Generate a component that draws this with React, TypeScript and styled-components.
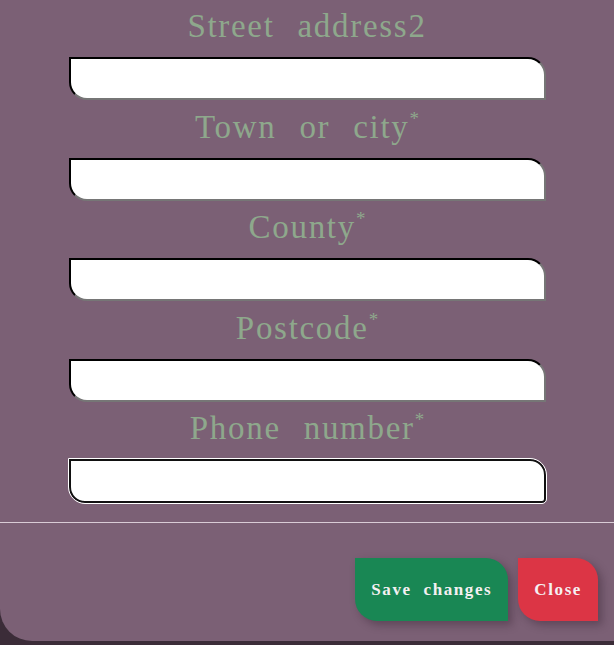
import React from 'react';
import styled, { createGlobalStyle } from 'styled-components';

const GlobalStyle = createGlobalStyle`
  html, body {
    margin: 0;
    padding: 0;
    background: #3b2c38;
  }
`;

const fields = [
  { label: 'Street address2', required: false },
  { label: 'Town or city', required: true },
  { label: 'County', required: true },
  { label: 'Postcode', required: true },
  { label: 'Phone number', required: true, focused: true },
];

const App = () => {
  return (
    <>
      <GlobalStyle />
      <Modal>
        <Body>
          {fields.map((field, index) => (
            <Field key={index}>
              <Label>
                {field.label}
                {field.required && <Star>*</Star>}
              </Label>
              <Input type="text" $focused={!!field.focused} />
            </Field>
          ))}
        </Body>
        <Footer>
          <Button $variant="save">Save changes</Button>
          <Button $variant="close">Close</Button>
        </Footer>
      </Modal>
    </>
  );
};

export default App;

const Modal = styled.div`
  width: 614px;
  height: 641px;
  background: #7b6075;
  border-bottom-left-radius: 32px;
  display: flex;
  flex-direction: column;
  font-family: "Liberation Serif", serif;
`;

const Body = styled.div`
  display: flex;
  flex-direction: column;
  align-items: center;
  gap: 7.5px;
  padding-top: 7px;
  padding-bottom: 19px;
  border-bottom: 1px solid #d9ccd6;
`;

const Field = styled.div`
  display: flex;
  flex-direction: column;
  align-items: center;
  width: 477px;
`;

const Label = styled.label`
  color: #8ea88c;
  font-size: 33px;
  line-height: 38px;
  height: 38px;
  word-spacing: 13px;
  letter-spacing: 1.7px;
  margin-bottom: 12px;
  white-space: nowrap;
`;

const Star = styled.span`
  font-size: 19px;
  line-height: 0;
  position: relative;
  top: -13px;
  letter-spacing: 0;
`;

const Input = styled.input<{ $focused: boolean }>`
  box-sizing: border-box;
  width: 477px;
  height: 43px;
  background: #fff;
  border: 2px inset #767676;
  border-top-color: #1c181b;
  border-left-color: #1c181b;
  border-radius: 0 18px 0 18px;
  outline: ${(p) => (p.$focused ? '1px solid #fff' : 'none')};
  ${(p) =>
    p.$focused &&
    `
    border: 2px solid #111;
    border-radius: 0 16px 4px 16px;
    height: 44px;
  `}
`;

const Footer = styled.div`
  display: flex;
  justify-content: flex-end;
  gap: 10px;
  padding: 35px 16px 0 0;
`;

const Button = styled.button<{ $variant: 'save' | 'close' }>`
  height: 63px;
  padding: 0 16px;
  border: none;
  border-radius: 0 22px 0 22px;
  background: ${(p) => (p.$variant === 'save' ? '#198754' : '#dc3545')};
  color: #f5f0f2;
  font-family: "Liberation Serif", serif;
  font-weight: bold;
  font-size: 17px;
  letter-spacing: 1.6px;
  word-spacing: 6px;
  box-shadow: 4px 4px 8px rgba(40, 20, 35, 0.35);
`;
